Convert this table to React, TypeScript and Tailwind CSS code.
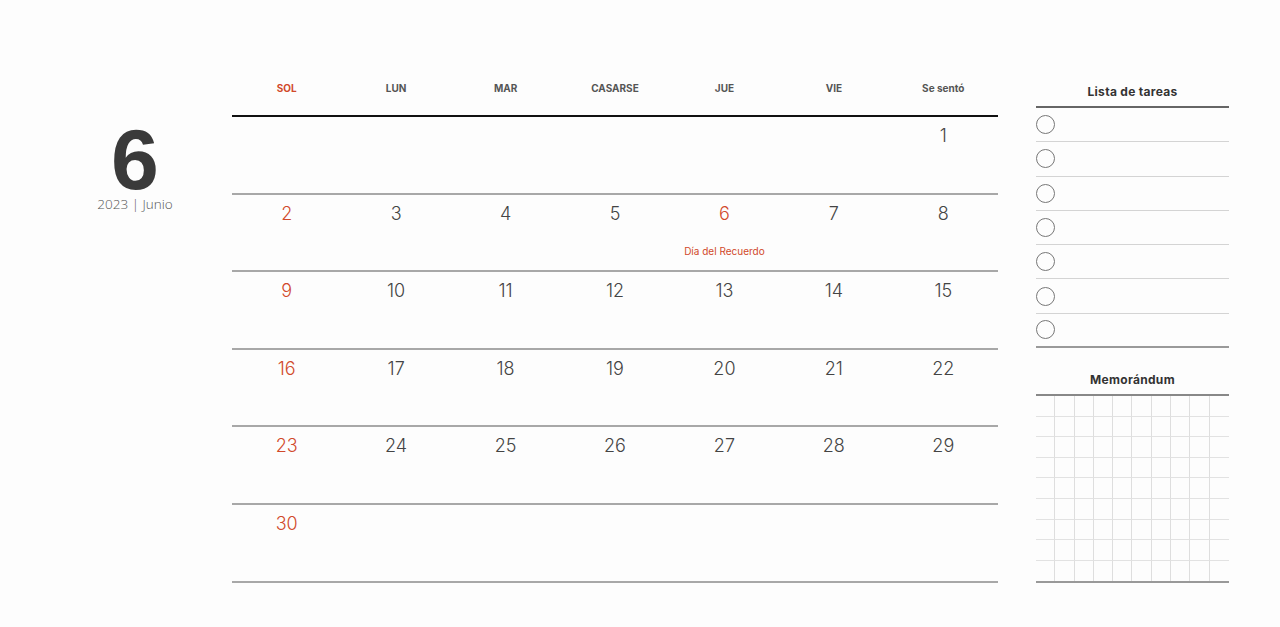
import React from 'react';

const days = ['SOL', 'LUN', 'MAR', 'CASARSE', 'JUE', 'VIE', 'Se sentó'];

const weeks: (number | null)[][] = [
  [null, null, null, null, null, null, 1],
  [2, 3, 4, 5, 6, 7, 8],
  [9, 10, 11, 12, 13, 14, 15],
  [16, 17, 18, 19, 20, 21, 22],
  [23, 24, 25, 26, 27, 28, 29],
  [30, null, null, null, null, null, null],
];

const holidays: { [key: number]: string } = { 6: 'Día del Recuerdo' };

const red = 'text-[#d1492b]';

const TodoList = () => (
  <div className="w-[193px]">
    <div className="h-[22px] text-center text-[12px] font-bold leading-[16px] tracking-wide text-[#333]">
      Lista de tareas
    </div>
    <div className="border-t-2 border-[#666]">
      {Array.from({ length: 7 }, (_, i) => (
        <div
          key={i}
          className={
            i === 6
              ? 'flex h-[34.3px] items-center border-b-2 border-[#9a9a9a]'
              : 'flex h-[34.3px] items-center border-b border-[#d4d4d4]'
          }
        >
          <span className="h-[19px] w-[19px] rounded-full border border-[#777]" />
        </div>
      ))}
    </div>
  </div>
);

const Memo = () => (
  <div className="mt-[24px] w-[193px]">
    <div className="h-[22px] text-center text-[12px] font-bold leading-[16px] tracking-wide text-[#333]">
      Memorándum
    </div>
    <div className="grid grid-cols-10 border-t-2 border-b-2 border-t-[#888] border-b-[#999]">
      {Array.from({ length: 90 }, (_, i) => {
        const lastCol = i % 10 === 9;
        const lastRow = i >= 80;
        let cls = 'h-[20.6px]';
        if (!lastCol) cls += ' border-r border-r-[#dedede]';
        if (!lastRow) cls += ' border-b border-b-[#e2e2e2]';
        return <div key={i} className={cls} />;
      })}
    </div>
  </div>
);

export default function App() {
  return (
    <div
      className="flex h-[627px] w-[1280px] bg-[#fdfdfd] text-[#4a4a4a]"
      style={{ fontFamily: 'Inter, "Noto Sans", sans-serif' }}
    >
      {/* Month label */}
      <div className="w-[232px] pl-[38px] pt-[123px]">
        <div className="flex flex-col items-center">
          <div
            className="text-[86px] font-bold leading-[72px] text-[#3a3a3a]"
            style={{ fontFamily: '"Liberation Sans", Arial, sans-serif' }}
          >
            6
          </div>
          <div
            className="mt-[1px] text-[13.5px] font-light leading-[17px] text-[#555]"
            style={{ fontFamily: '"Open Sans", sans-serif' }}
          >
            2023 | Junio
          </div>
        </div>
      </div>

      {/* Calendar */}
      <div className="w-[766px] pt-[79px]">
        <div className="grid h-[38px] grid-cols-7 border-b-2 border-[#111]">
          {days.map((d, i) => (
            <div
              key={d}
              className={
                i === 0
                  ? `text-center text-[10px] font-bold leading-[18px] ${red}`
                  : 'text-center text-[10px] font-bold leading-[18px] text-[#555]'
              }
            >
              {d}
            </div>
          ))}
        </div>
        {weeks.map((week, w) => (
          <div key={w} className="grid h-[77.6px] grid-cols-7 border-b-2 border-[#a8a8a8]">
            {week.map((n, i) => (
              <div key={i} className="flex flex-col items-center pt-[7px]">
                {n !== null && (
                  <>
                    <span
                      className={
                        i === 0 || holidays[n]
                          ? `text-[18px] font-light leading-[24px] ${red}`
                          : 'text-[18px] font-light leading-[24px] text-[#444]'
                      }
                    >
                      {n}
                    </span>
                    {holidays[n] && (
                      <span className={`mt-[18px] text-[10px] leading-[14px] ${red}`}>
                        {holidays[n]}
                      </span>
                    )}
                  </>
                )}
              </div>
            ))}
          </div>
        ))}
      </div>

      {/* Side panel */}
      <div className="ml-[38px] pt-[84px]">
        <TodoList />
        <Memo />
      </div>
    </div>
  );
}
